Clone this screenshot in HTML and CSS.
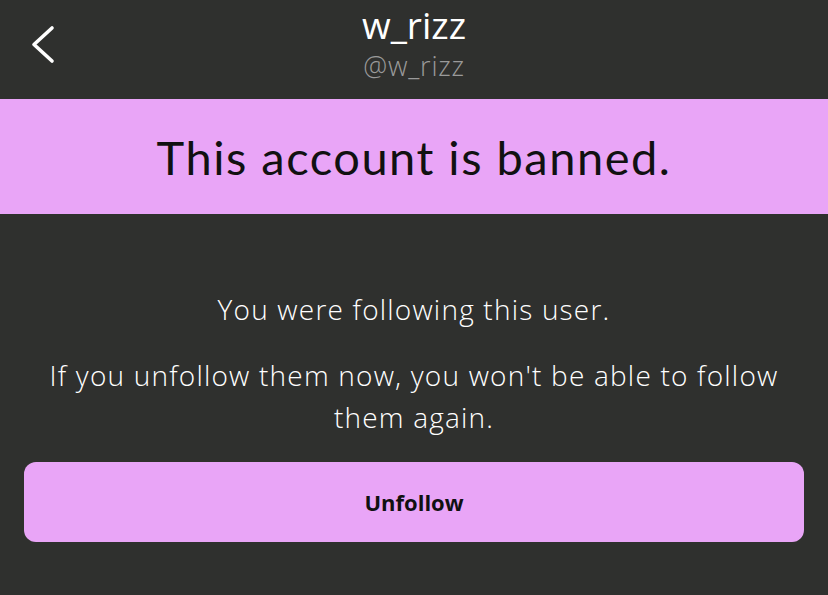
FILE: index.html
```html
<!DOCTYPE html>
<html>
<head>
<meta charset="utf-8">
<link rel="stylesheet" href="styles.css">
</head>
<body>
<div class="page">
  <header class="header">
    <button class="back" aria-label="Back">
      <svg width="34" height="42" viewBox="0 0 34 42"><path d="M27 5 L9 21.5 L27 38" fill="none" stroke="#fff" stroke-width="3.6" stroke-linecap="round" stroke-linejoin="round"/></svg>
    </button>
    <div class="titles">
      <div class="name">w_rizz</div>
      <div class="handle">@w_rizz</div>
    </div>
  </header>
  <div class="banner">This account is banned.</div>
  <main class="content">
    <p class="msg first">You were following this user.</p>
    <p class="msg">If you unfollow them now, you won't be able to follow them again.</p>
    <button class="unfollow">Unfollow</button>
  </main>
</div>
</body>
</html>
```
FILE: styles.css
```css
html, body {
  margin: 0;
  padding: 0;
  background: #2f302e;
}
.page {
  width: 828px;
  height: 595px;
  overflow: hidden;
  font-family: "Open Sans", "Noto Sans", sans-serif;
  color: #fff;
}
.header {
  position: relative;
  height: 99px;
  display: flex;
  justify-content: center;
}
.back {
  position: absolute;
  left: 25px;
  top: 23px;
  background: none;
  border: 0;
  padding: 0;
}
.titles {
  display: flex;
  flex-direction: column;
  align-items: center;
}
.name {
  font-size: 37px;
  font-weight: 400;
  line-height: 50px;
}
.handle {
  font-size: 27px;
  font-weight: 300;
  letter-spacing: 0.8px;
  color: #9a9a9a;
  line-height: 32px;
}
.banner {
  background: #e9a5f7;
  color: #111;
  height: 115px;
  display: flex;
  align-items: center;
  justify-content: center;
  font-family: "Lato", "Open Sans", sans-serif;
  font-size: 47px;
  letter-spacing: 1.5px;
}
.content {
  padding: 74px 24px 0;
  display: flex;
  flex-direction: column;
  align-items: stretch;
}
.msg {
  margin: 0;
  text-align: center;
  font-size: 28px;
  font-weight: 300;
  letter-spacing: 1.2px;
  line-height: 42px;
  padding: 0 8px;
}
.msg.first {
  margin-bottom: 24px;
}
.unfollow {
  margin-top: 24px;
  height: 80px;
  border: 0;
  border-radius: 12px;
  background: #e9a5f7;
  color: #111;
  font-family: "Open Sans", sans-serif;
  font-size: 22px;
  font-weight: 700;
}
```
